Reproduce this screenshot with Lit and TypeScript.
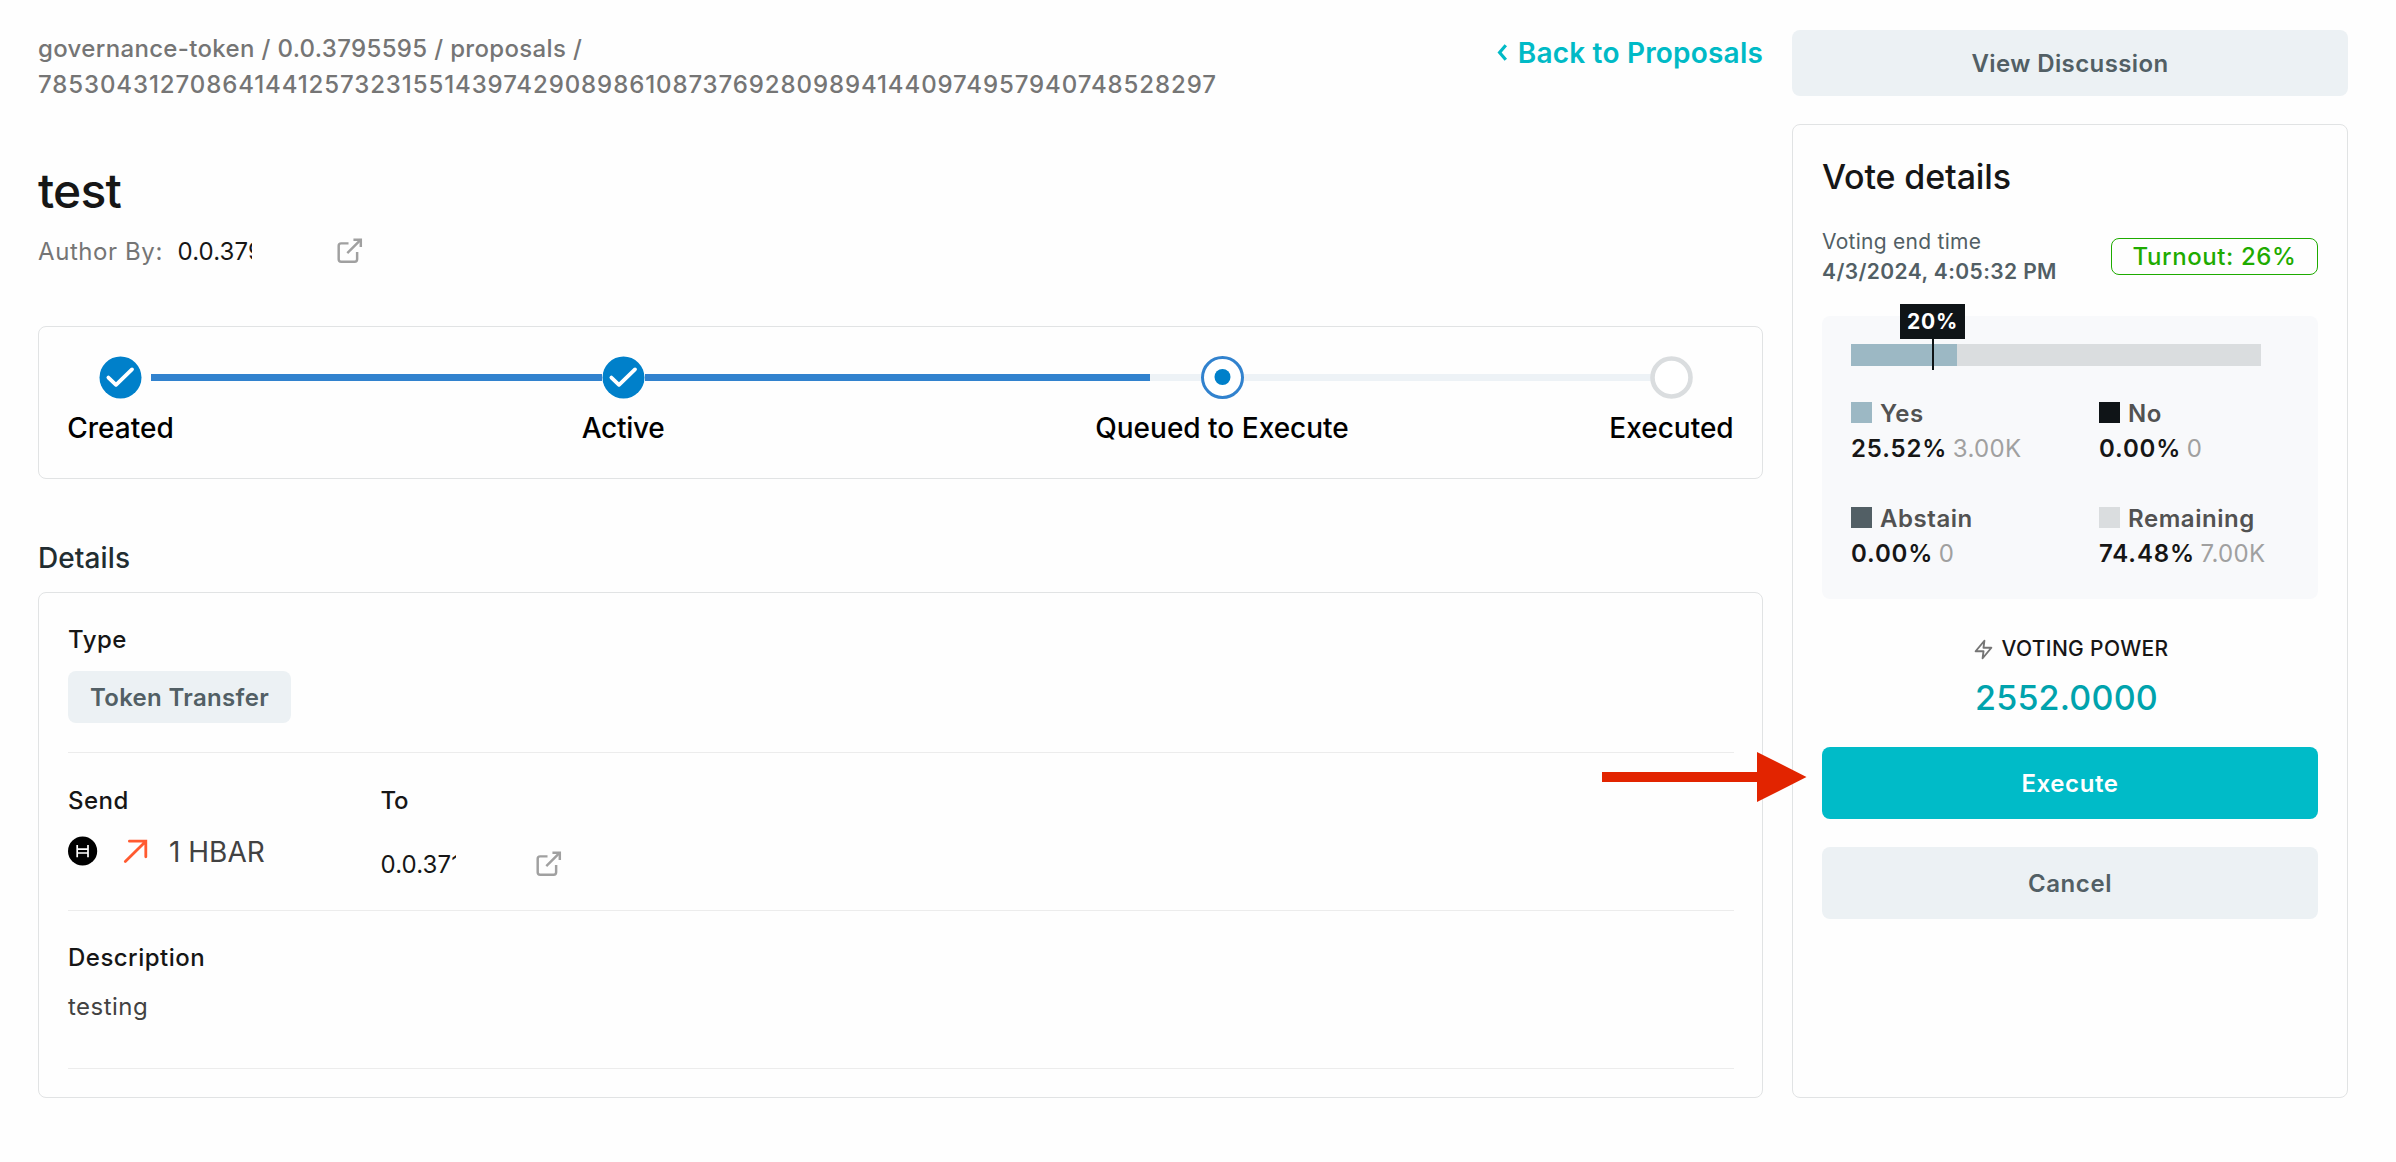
import { LitElement, html, css, svg, nothing } from "lit";
import { customElement, property } from "lit/decorators.js";
import { classMap } from "lit/directives/class-map.js";

type StepState = "done" | "current" | "todo";

interface Tally {
  label: string;
  tone: string;
  percent: string;
  votes: string;
}

const externalLink = html`<svg class="ext" viewBox="0 0 24 24" fill="none" stroke="currentColor" stroke-width="2">
  <path d="M18 13v6a2 2 0 0 1-2 2H5a2 2 0 0 1-2-2V8a2 2 0 0 1 2-2h6" />
  <path d="M15 3h6v6" />
  <path d="M10 14L21 3" />
</svg>`;

const base = css`
  :host {
    display: block;
    font-family: Inter, "Liberation Sans", sans-serif;
    font-size: 24px;
    line-height: 36px;
    color: #161616;
    box-sizing: border-box;
  }
  * {
    box-sizing: border-box;
  }
  svg {
    display: block;
    flex: none;
  }
  .ext {
    width: 29.5px;
    height: 29.5px;
    color: #a0a0a0;
  }
`;

@customElement("proposal-stepper")
export class ProposalStepper extends LitElement {
  static styles = [
    base,
    css`
      .card {
        position: relative;
        height: 153px;
        border: 1px solid #e1e3e4;
        border-radius: 8px;
        padding: 29px 29px 0 29px;
      }
      .track {
        position: absolute;
        left: 112px;
        top: 47px;
        width: 1500px;
        height: 7px;
        background: #edf2f6;
      }
      .fill {
        height: 100%;
        background: #3182ce;
      }
      .steps {
        position: relative;
        display: grid;
        grid-template-columns: 105px 82px 252px 123px;
        column-gap: 0;
      }
      .step {
        display: flex;
        flex-direction: column;
        align-items: center;
        gap: 11px;
      }
      .label {
        font-size: 28px;
        font-weight: 500;
        color: #000;
        white-space: nowrap;
      }
      .s1 {
        margin-left: 409px;
        margin-right: -409px;
      }
      .s1 .label {
        letter-spacing: -0.3px;
      }
      .s2 {
        margin-left: 841px;
        margin-right: -841px;
      }
      .s3 {
        margin-left: 1103px;
        margin-right: -1103px;
      }
    `,
  ];

  private steps: { label: string; state: StepState }[] = [
    { label: "Created", state: "done" },
    { label: "Active", state: "done" },
    { label: "Queued to Execute", state: "current" },
    { label: "Executed", state: "todo" },
  ];

  private dot(state: StepState) {
    const inner =
      state === "done"
        ? svg`<circle cx="21.5" cy="21.5" r="22" fill="#fff"/><circle cx="21.5" cy="21.5" r="21" fill="#0080ca"/>
              <path d="M9.4 21.6l7.6 7.2 16-15.4" fill="none" stroke="#fff" stroke-width="3.8" stroke-linecap="round" stroke-linejoin="round"/>`
        : state === "current"
          ? svg`<circle cx="21.5" cy="21.5" r="20" fill="#fff" stroke="#3182ce" stroke-width="3"/><circle cx="21.5" cy="21" r="8" fill="#0080ca"/>`
          : svg`<circle cx="21.5" cy="21.5" r="19" fill="#fff" stroke="#dadddf" stroke-width="4.6"/>`;
    return html`<svg width="43" height="43" viewBox="0 0 43 43">${inner}</svg>`;
  }

  render() {
    return html`<div class="card">
      <div class="track"><div class="fill" style="width:66.6%"></div></div>
      <div class="steps">
        ${this.steps.map(
          (s, i) => html`<div class="step s${i}">${this.dot(s.state)}<span class="label">${s.label}</span></div>`,
        )}
      </div>
    </div>`;
  }
}

@customElement("proposal-details")
export class ProposalDetails extends LitElement {
  static styles = [
    base,
    css`
      .card {
        height: 506px;
        border: 1px solid #e1e3e4;
        border-radius: 8px;
        padding: 0 28px 0 29px;
      }
      .section {
        border-bottom: 1px solid #ececec;
      }
      .type {
        padding: 29px 0 29px;
        height: 160px;
      }
      .transfer {
        padding: 30px 0 0;
        height: 158px;
        display: grid;
        grid-template-columns: 312.5px 1fr;
      }
      .about {
        padding: 29px 0 0;
        height: 158px;
      }
      .name {
        font-weight: 500;
        letter-spacing: 0.48px;
      }
      .tight {
        letter-spacing: -0.3px;
      }
      .chip {
        display: flex;
        align-items: center;
        justify-content: center;
        width: 223px;
        height: 52px;
        margin-top: 13px;
        padding-top: 2px;
        border-radius: 8px;
        background: #ecf1f4;
        color: #525f65;
        font-weight: 600;
        letter-spacing: 0.33px;
      }
      .amount {
        display: flex;
        align-items: center;
        height: 36px;
        margin-top: 14px;
      }
      .out {
        margin: 0 20px 0 25px;
      }
      .qty {
        padding-top: 2px;
        font-size: 28px;
        color: #424242;
      }
      .account {
        display: flex;
        align-items: center;
        height: 36px;
        margin-top: 27px;
      }
      .id {
        width: 75.5px;
        padding-top: 2px;
        overflow: hidden;
        white-space: nowrap;
        letter-spacing: 0.1px;
        margin-right: 78px;
      }
      .body {
        margin-top: 13px;
        color: #424242;
        letter-spacing: 0.46px;
      }
    `,
  ];

  render() {
    return html`<div class="card">
      <div class="section type">
        <div class="name">Type</div>
        <div class="chip">Token Transfer</div>
      </div>
      <div class="section transfer">
        <div>
          <div class="name">Send</div>
          <div class="amount">
            <svg width="30" height="30" viewBox="0 0 30 30">
              <circle cx="14.6" cy="15" r="14.6" fill="#000" />
              <path d="M9.2 9v12.2M20 9v12.2M9.2 13.2H20M9.2 17H20" fill="none" stroke="#fff" stroke-width="1.7" />
            </svg>
            <svg class="out" width="26" height="26" viewBox="0 0 26 26" fill="none" stroke="#ff5a30" stroke-width="2.8">
              <path d="M2.3 23.6L22.6 3.4M6.4 3.2H22.8V18.8" stroke-linecap="round" />
            </svg>
            <span class="qty">1 HBAR</span>
          </div>
        </div>
        <div>
          <div class="name tight">To</div>
          <div class="account"><span class="id">0.0.371</span>${externalLink}</div>
        </div>
      </div>
      <div class="section about">
        <div class="name">Description</div>
        <div class="body">testing</div>
      </div>
    </div>`;
  }
}

@customElement("vote-stats")
export class VoteStats extends LitElement {
  static styles = [
    base,
    css`
      .panel {
        height: 283px;
        padding: 28px 0 0 29px;
        border-radius: 8px;
        background: #f8f9fb;
      }
      .bar {
        position: relative;
        display: flex;
        width: 410px;
        height: 22px;
        background: #dadddf;
      }
      .yes {
        background: #9cb8c4;
      }
      .no {
        background: #0f1417;
      }
      .abstain {
        background: #525f65;
      }
      .rest {
        background: #dadddf;
      }
      .bar .yes {
        min-width: 106px;
      }
      .marker {
        position: absolute;
        top: -40px;
        width: 65px;
        margin-left: -33px;
        display: flex;
        flex-direction: column;
        align-items: center;
      }
      .flag {
        width: 65px;
        height: 35px;
        line-height: 35px;
        text-align: center;
        background: #0f1417;
        color: #fff;
        font-size: 21px;
        font-weight: 700;
        letter-spacing: 0.8px;
      }
      .needle {
        width: 2px;
        height: 31px;
        background: #0f1417;
      }
      .grid {
        display: grid;
        grid-template-columns: 248px 1fr;
        row-gap: 35px;
        margin-top: 30px;
        line-height: 35px;
      }
      .head {
        display: flex;
        align-items: center;
        gap: 8px;
        color: #525252;
        font-weight: 600;
        letter-spacing: 0.55px;
      }
      .swatch {
        width: 21px;
        height: 21px;
        margin-top: -2px;
      }
      .line {
        display: flex;
        gap: 5.5px;
      }
      .pct {
        font-weight: 600;
        letter-spacing: 0.88px;
      }
      .count {
        color: #a0a0a0;
        letter-spacing: 0.35px;
      }
    `,
  ];

  private tallies: Tally[] = [
    { label: "Yes", tone: "yes", percent: "25.52%", votes: "3.00K" },
    { label: "No", tone: "no", percent: "0.00%", votes: "0" },
    { label: "Abstain", tone: "abstain", percent: "0.00%", votes: "0" },
    { label: "Remaining", tone: "rest", percent: "74.48%", votes: "7.00K" },
  ];

  render() {
    return html`<div class="panel">
      <div class="bar">
        ${this.tallies.map((t) => html`<div class=${t.tone} style="width:${t.percent}"></div>`)}
        <div class="marker" style="left:20%">
          <span class="flag">20%</span>
          <span class="needle"></span>
        </div>
      </div>
      <div class="grid">
        ${this.tallies.map(
          (t) => html`<div>
            <div class="head"><span class=${classMap({ swatch: true, [t.tone]: true })}></span>${t.label}</div>
            <div class="line"><span class="pct">${t.percent}</span><span class="count">${t.votes}</span></div>
          </div>`,
        )}
      </div>
    </div>`;
  }
}

@customElement("vote-button")
export class VoteButton extends LitElement {
  static styles = [
    base,
    css`
      button {
        display: flex;
        align-items: center;
        justify-content: center;
        width: 100%;
        height: 72px;
        padding: 2px 0 0;
        border: 0;
        border-radius: 8px;
        background: #ecf1f4;
        color: #525f65;
        font: 600 24px/36px Inter, "Liberation Sans", sans-serif;
        letter-spacing: 0.6px;
      }
      .compact {
        height: 66px;
        letter-spacing: 0.4px;
      }
      .primary {
        background: #00bbc8;
        color: #fff;
      }
    `,
  ];

  @property() kind = "";

  render() {
    return html`<button class=${this.kind || nothing}><slot></slot></button>`;
  }
}

@customElement("app-root")
export class AppRoot extends LitElement {
  static styles = [
    base,
    css`
      :host {
        position: relative;
        width: 2396px;
        height: 1162px;
        padding: 30px 48px 0 38px;
        background: #fefefe;
        overflow: hidden;
      }
      .page {
        display: grid;
        grid-template-columns: 1725px 556px;
        column-gap: 29px;
      }
      .top {
        display: flex;
        justify-content: space-between;
        align-items: flex-start;
        height: 72px;
      }
      .crumbs {
        margin-top: 1px;
        color: #757575;
        font-weight: 500;
        letter-spacing: 0.34px;
      }
      .hash {
        letter-spacing: 0.9px;
      }
      .back {
        display: flex;
        align-items: center;
        gap: 9px;
        margin-top: 5px;
        color: #00bac6;
        font-size: 28px;
        font-weight: 600;
        letter-spacing: 0.2px;
        white-space: nowrap;
      }
      .title {
        margin: 59px 0 0;
        font-size: 48px;
        line-height: 60px;
        font-weight: 500;
        letter-spacing: -0.8px;
      }
      .author {
        display: flex;
        align-items: center;
        height: 36px;
        margin-top: 12px;
      }
      .by {
        width: 139.5px;
        padding-top: 2px;
        color: #757575;
        letter-spacing: 0.58px;
      }
      .id {
        width: 74.5px;
        padding-top: 2px;
        overflow: hidden;
        white-space: nowrap;
        letter-spacing: 0.1px;
        margin-right: 82.5px;
      }
      .stepper {
        margin-top: 57px;
      }
      .heading {
        margin: 61px 0 16px;
        font-size: 28px;
        line-height: 36px;
        font-weight: 500;
        color: #222d31;
        letter-spacing: 0.1px;
      }
      .vote {
        height: 974px;
        margin-top: 28px;
        padding: 30px 29px 0;
        border: 1px solid #e1e3e4;
        border-radius: 8px;
      }
      .vote-title {
        margin: 0;
        font-size: 34px;
        line-height: 44px;
        font-weight: 500;
        letter-spacing: -0.14px;
      }
      .when {
        display: flex;
        justify-content: space-between;
        align-items: flex-start;
        margin: 28px 0 29px;
        font-size: 21px;
        line-height: 30px;
        color: #525f65;
        letter-spacing: 0.27px;
      }
      .date {
        font-weight: 600;
        letter-spacing: 0.4px;
      }
      .badge {
        display: flex;
        align-items: center;
        justify-content: center;
        width: 207px;
        height: 37px;
        margin-top: 11px;
        padding-top: 1px;
        border: 1px solid #1eab00;
        border-radius: 8px;
        color: #1eab00;
        font-size: 24px;
        font-weight: 500;
        letter-spacing: 0.58px;
      }
      .power {
        display: flex;
        align-items: center;
        justify-content: center;
        gap: 8px;
        margin-top: 35px;
        padding-left: 1px;
        font-size: 21px;
        line-height: 30px;
        font-weight: 500;
        letter-spacing: 0.33px;
      }
      .power-value {
        margin: 12px 0 27px;
        padding-right: 7px;
        text-align: center;
        font-size: 34px;
        line-height: 44px;
        font-weight: 500;
        letter-spacing: 0.2px;
        color: #00a3ad;
      }
      .cancel {
        margin-top: 28px;
      }
      .pointer {
        position: absolute;
        left: 1602px;
        top: 752px;
      }
    `,
  ];

  render() {
    return html`
      <div class="page">
        <main>
          <div class="top">
            <div class="crumbs">
              <div>governance-token / 0.0.3795595 / proposals /</div>
              <div class="hash">78530431270864144125732315514397429089861087376928098941440974957940748528297</div>
            </div>
            <div class="back">
              <svg width="14" height="20" viewBox="0 0 14 20" fill="none" stroke="currentColor" stroke-width="3.2">
                <path d="M10.8 2.2L4.6 9.5l6.2 7.3" />
              </svg>
              <span>Back to Proposals</span>
            </div>
          </div>
          <h1 class="title">test</h1>
          <div class="author">
            <span class="by">Author By:</span><span class="id">0.0.379</span>${externalLink}
          </div>
          <proposal-stepper class="stepper"></proposal-stepper>
          <h2 class="heading">Details</h2>
          <proposal-details></proposal-details>
        </main>
        <aside>
          <vote-button kind="compact">View Discussion</vote-button>
          <div class="vote">
            <h2 class="vote-title">Vote details</h2>
            <div class="when">
              <div>
                <div>Voting end time</div>
                <div class="date">4/3/2024, 4:05:32 PM</div>
              </div>
              <span class="badge">Turnout: 26%</span>
            </div>
            <vote-stats></vote-stats>
            <div class="power">
              <svg width="21" height="21" viewBox="0 0 24 24" fill="none" stroke="#757575" stroke-width="2.2" stroke-linejoin="round">
                <path d="M13 2L3 14h9l-1 8 10-12h-9z" />
              </svg>
              <span>VOTING POWER</span>
            </div>
            <div class="power-value">2552.0000</div>
            <vote-button kind="primary">Execute</vote-button>
            <vote-button class="cancel">Cancel</vote-button>
          </div>
        </aside>
      </div>
      <svg class="pointer" width="205" height="50" viewBox="0 0 205 50">
        <path d="M0 20H155V0L204.5 25L155 50V30H0z" fill="#e22400" />
      </svg>
    `;
  }
}
